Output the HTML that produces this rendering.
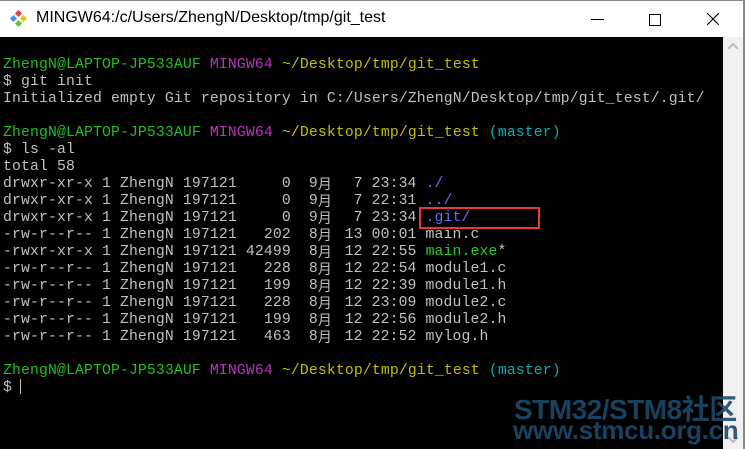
<!DOCTYPE html>
<html><head><meta charset="utf-8"><style>
body{margin:0;width:745px;height:449px;overflow:hidden;background:#fff;position:relative;font-family:"Liberation Sans",sans-serif}
#title{position:absolute;left:0;top:0;width:744px;height:37px;background:#fff;border-right:1px solid #888;border-top:1px solid #888;box-sizing:border-box}
#title .t{position:absolute;left:36px;top:8px;font-size:16px;color:#000;font-family:"Liberation Sans","DejaVu Sans",sans-serif}
#term{position:absolute;left:0;top:37px;width:723px;height:412px;background:#000}
#sb{position:absolute;left:723px;top:37px;width:20px;height:412px;background:#f0f0f0}
#bd{position:absolute;left:743px;top:0;width:2px;height:449px;background:#888}
pre{position:absolute;left:3px;top:20px;margin:0;font-family:"Liberation Mono",monospace;font-size:14.77px;letter-spacing:0.135px;line-height:17px;color:#c0c0c0}
.g{color:#1fc01f}.m{color:#c030c0}.y{color:#c0c000}.c{color:#00b0b8}.b{color:#6a6aff}.gr{color:#25cc25}
.k{display:inline-block;width:17.74px;letter-spacing:0;font-family:"Noto Sans CJK SC",sans-serif;font-size:14px;line-height:17px;vertical-align:top}
#box{position:absolute;left:419px;top:207px;width:117px;height:18px;border:2px solid #e53a3a}
#cur{position:absolute;left:20px;top:379px;width:1px;height:15px;background:#c0c0c0}
.wm{position:absolute;color:#1d4a69;font-weight:bold;font-family:"Liberation Sans","Noto Sans CJK SC",sans-serif;opacity:.9}
</style></head><body>
<div id="title">
<svg style="position:absolute;left:9px;top:9px" width="18" height="18" viewBox="0 0 18 18">
<rect x="7" y="1" width="5" height="5" fill="#e04040" transform="rotate(45 9.5 3.5)"/>
<rect x="2" y="6" width="5" height="5" fill="#4a90e0" transform="rotate(45 4.5 8.5)"/>
<rect x="12" y="6" width="5" height="5" fill="#e0c030" transform="rotate(45 14.5 8.5)"/>
<rect x="7" y="11" width="5" height="5" fill="#60c040" transform="rotate(45 9.5 13.5)"/>
</svg>
<span class="t">MINGW64:/c/Users/ZhengN/Desktop/tmp/git_test</span>
<div style="position:absolute;left:591px;top:18px;width:13px;height:1px;background:#000"></div>
<div style="position:absolute;left:649px;top:13px;width:10px;height:10px;border:1px solid #000"></div>
<svg style="position:absolute;left:707px;top:12px" width="12" height="12"><path d="M0 0L12 12M12 0L0 12" stroke="#000" stroke-width="1.1"/></svg>
</div>
<div id="term"><pre><span class="g">ZhengN@LAPTOP-JP533AUF</span> <span class="m">MINGW64</span> <span class="y">~/Desktop/tmp/git_test</span>
$ git init
Initialized empty Git repository in C:/Users/ZhengN/Desktop/tmp/git_test/.git/

<span class="g">ZhengN@LAPTOP-JP533AUF</span> <span class="m">MINGW64</span> <span class="y">~/Desktop/tmp/git_test</span> <span class="c">(master)</span>
$ ls -al
total 58
drwxr-xr-x 1 ZhengN 197121     0  9<span class="k">月</span>  7 23:34 <span class="b">./</span>
drwxr-xr-x 1 ZhengN 197121     0  9<span class="k">月</span>  7 22:31 <span class="b">../</span>
drwxr-xr-x 1 ZhengN 197121     0  9<span class="k">月</span>  7 23:34 <span class="b">.git/</span>
-rw-r--r-- 1 ZhengN 197121   202  8<span class="k">月</span> 13 00:01 main.c
-rwxr-xr-x 1 ZhengN 197121 42499  8<span class="k">月</span> 12 22:55 <span class="gr">main.exe</span>*
-rw-r--r-- 1 ZhengN 197121   228  8<span class="k">月</span> 12 22:54 module1.c
-rw-r--r-- 1 ZhengN 197121   199  8<span class="k">月</span> 12 22:39 module1.h
-rw-r--r-- 1 ZhengN 197121   228  8<span class="k">月</span> 12 23:09 module2.c
-rw-r--r-- 1 ZhengN 197121   199  8<span class="k">月</span> 12 22:56 module2.h
-rw-r--r-- 1 ZhengN 197121   463  8<span class="k">月</span> 12 22:52 mylog.h

<span class="g">ZhengN@LAPTOP-JP533AUF</span> <span class="m">MINGW64</span> <span class="y">~/Desktop/tmp/git_test</span> <span class="c">(master)</span>
$ </pre></div>
<div id="sb">
<svg style="position:absolute;left:5px;top:6px" width="10" height="6"><path d="M0 6L5 1L10 6" stroke="#bbb" stroke-width="2" fill="none"/></svg>
<svg style="position:absolute;left:5px;top:400px" width="10" height="6"><path d="M0 0L5 5L10 0" stroke="#bbb" stroke-width="2" fill="none"/></svg>
</div>
<div id="bd"></div>
<div id="box"></div>
<div id="cur"></div>
<div class="wm" style="left:514px;top:388px;font-size:28px;letter-spacing:-0.5px">STM32/STM8社区</div>
<div class="wm" style="left:513px;top:415px;font-size:26px;letter-spacing:-0.3px">www.stmcu.org.cn</div>
</body></html>
